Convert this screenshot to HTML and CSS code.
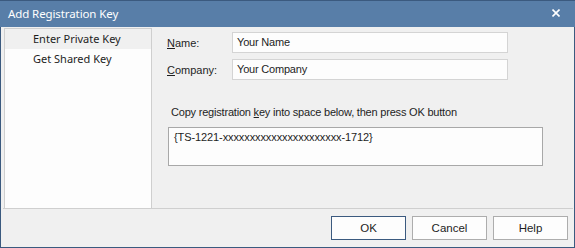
FILE: index.html
```html
<!DOCTYPE html>
<html lang="en">
<head>
    <meta charset="UTF-8">
    <title>Add Registration Key</title>
    <link rel="stylesheet" href="styles.css">
</head>
<body>
    <div class="window">
        <div class="titlebar">
            <span class="title">Add Registration Key</span>
            <svg class="close" width="8" height="8" viewBox="0 0 8 8">
                <path d="M0.5 0.5 L7.5 7.5 M7.5 0.5 L0.5 7.5" stroke="#fff" stroke-width="1.6"/>
            </svg>
        </div>

        <div class="main">
            <div class="side">
                <div class="side-item selected">Enter Private Key</div>
                <div class="side-item">Get Shared Key</div>
            </div>

            <div class="content">
                <div class="field">
                    <label class="label"><u>N</u>ame:</label>
                    <div class="input">Your Name</div>
                </div>
                <div class="field">
                    <label class="label"><u>C</u>ompany:</label>
                    <div class="input">Your Company</div>
                </div>
                <p class="hint">Copy registration <u>k</u>ey into space below, then press OK button</p>
                <div class="keybox">{TS-1221-xxxxxxxxxxxxxxxxxxxxxx-1712}</div>
            </div>
        </div>

        <div class="footer">
            <button class="btn default">OK</button>
            <button class="btn">Cancel</button>
            <button class="btn">Help</button>
        </div>
    </div>
</body>
</html>
```

FILE: styles.css
```css
body {
    margin: 0;
    background-color: #f0f0f0;
}
.window {
    width: 575px;
    height: 248px;
    box-sizing: border-box;
    border: 1px solid #3b5a7f;
    border-top: none;
    background-color: #f0f0f0;
    font-family: 'Liberation Sans', Arial, sans-serif;
    font-size: 11px;
    color: #1e1e1e;
    display: flex;
    flex-direction: column;
}
.titlebar {
    height: 27px;
    margin: 0 -1px;
    background-color: #587ea8;
    border-top: 1px solid #3b5a7f;
    box-sizing: border-box;
    display: flex;
    align-items: center;
    justify-content: space-between;
    padding: 0 15px 0 8px;
}
.title {
    color: #fff;
    font-family: 'Noto Sans', sans-serif;
    font-size: 11.5px;
    letter-spacing: -0.1px;
    margin-top: -1px;
}
.close {
    margin-top: -3px;
}
.main {
    display: flex;
    height: 182px;
    box-sizing: border-box;
    margin: 0 1px 0 2px;
    padding-top: 1px;
    border-bottom: 1px solid #cfcfcf;
}
.side {
    width: 148px;
    margin-left: 1px;
    box-sizing: border-box;
    background-color: #fdfdfd;
    border: 1px solid #cfcfcf;
    border-bottom: none;
    font-family: 'Noto Sans', sans-serif;
    font-size: 11px;
}
.side-item {
    height: 20px;
    line-height: 19px;
    padding-left: 28px;
}
.side-item.selected {
    background-color: #f0f0f0;
}
.content {
    flex: 1;
    padding: 4px 0 0 15px;
}
.field {
    display: flex;
    align-items: center;
    margin-bottom: 6px;
}
.label {
    width: 65px;
}
.input {
    width: 276px;
    height: 21px;
    box-sizing: border-box;
    background-color: #fdfdfd;
    border: 1px solid #d4d4d4;
    padding: 3px 0 0 4px;
    font-size: 11px;
    letter-spacing: -0.2px;
}
.hint {
    margin: 25px 0 0 4px;
    line-height: 14px;
    letter-spacing: -0.2px;
}
.keybox {
    width: 375px;
    height: 39px;
    box-sizing: border-box;
    margin: 8px 0 0 1px;
    background-color: #fdfdfd;
    border: 1px solid #a8a8a8;
    padding: 3px 0 0 5px;
    letter-spacing: -0.1px;
}
.footer {
    flex: 1;
    display: flex;
    justify-content: flex-end;
    align-items: flex-start;
    gap: 6px;
    padding: 7px 6px 0 0;
}
.btn {
    width: 75px;
    height: 24px;
    box-sizing: border-box;
    background-color: #fdfdfd;
    border: 1px solid #adadad;
    font-family: 'Liberation Sans', Arial, sans-serif;
    font-size: 11.5px;
    color: #1e1e1e;
    padding: 0;
}
.btn.default {
    border-color: #3b5a7f;
}
```
